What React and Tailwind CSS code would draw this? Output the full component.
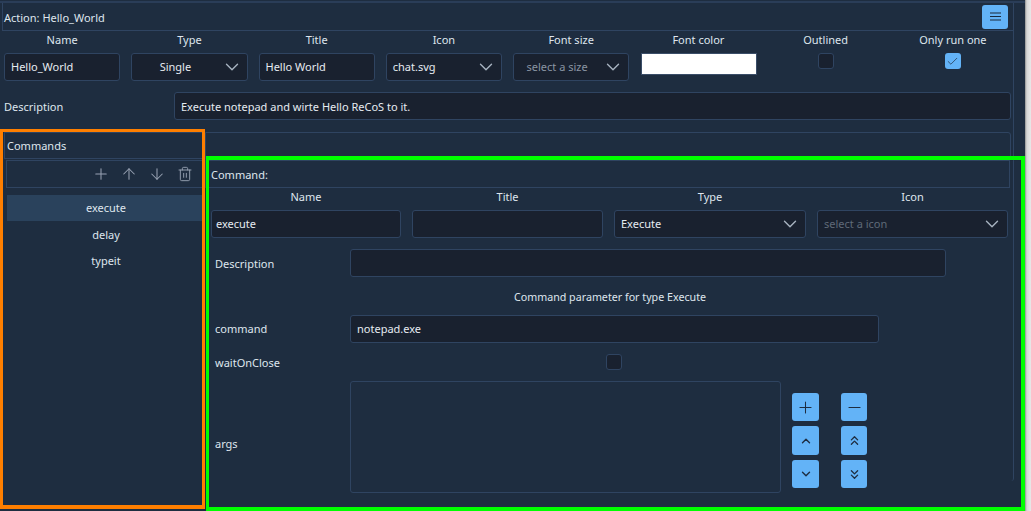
import React from "react";
import { Plus, Minus, ArrowUp, ArrowDown, Trash2, ChevronDown, ChevronUp, ChevronsUp, ChevronsDown, Check } from "lucide-react";

const Field = ({ children, className = "" }) => (
  <div className={"h-7 rounded-[3px] border border-[#2f4461] bg-[#19212f] flex items-center pl-[6px] pr-[6px] text-[#e6ebf1] " + className}>{children}</div>
);
const Select = ({ children, color = "text-[#e6ebf1]", center }) => (
  <div className={"h-7 rounded-[3px] border border-[#2f4461] bg-[#19212f] flex items-center " + color}>
    <span className={"flex-1 " + (center ? "text-center" : "pl-[6px]")}>{children}</span>
    <span className="w-[28px] pr-[2px] flex justify-center">
      <ChevronDown size={22} strokeWidth={1.5} className="text-[#a8b3c1]" />
    </span>
  </div>
);
const Lbl = ({ children }) => <div className="h-[14px] leading-[14px] text-center text-[#dfe6ee]">{children}</div>;
const Btn = ({ children, className = "" }) => (
  <div className={"rounded-[3px] bg-[#63b3f7] flex items-center justify-center text-[#1e2d40] " + className}>{children}</div>
);

export default function App() {
  return (
    <div className="flex w-[1031px] h-[511px] overflow-hidden bg-[#1e2d40] text-[11px] text-[#dfe6ee] font-['Noto_Sans',sans-serif]">
      <div className="relative w-[1025px] shrink-0">
        <div className="h-[3px] border-b-2 border-[#2a3d58]" />
        <div className="w-[1014px] h-[478px] border-r border-[#2f4461] rounded-br-[3px]">
          <div className="h-[28px] ml-[2px] border-l border-b border-[#2f4461] flex items-center justify-between pl-[1px] pr-[5px]">
            <span className="mt-[4px]">Action: Hello_World</span>
            <div className="w-[26px] h-[24px] rounded-[3px] bg-[#63b3f7] flex items-center justify-center">
              <svg width="11" height="9" viewBox="0 0 11 9"><path d="M0 1h11M0 4.5h11M0 8h11" stroke="#1a2a3d" strokeWidth="1.1" /></svg>
            </div>
          </div>
          <div className="pl-[4px] pr-[2px] pt-[2px]">
            <div className="grid grid-cols-8 gap-x-[11px] gap-y-[6px]">
              <Lbl>Name</Lbl><Lbl>Type</Lbl><Lbl>Title</Lbl><Lbl>Icon</Lbl><Lbl>Font size</Lbl><Lbl>Font color</Lbl><Lbl>Outlined</Lbl><Lbl>Only run one</Lbl>
              <Field>Hello_World</Field>
              <Select center>Single</Select>
              <Field>Hello World</Field>
              <Select>chat.svg</Select>
              <Select color="text-[#8a95a3]" center>select a size</Select>
              <div className="h-[22px] ml-[1px] bg-white border border-[#3a4d68]" />
              <div className="flex justify-center"><div className="w-4 h-4 rounded-[3px] border border-[#2f4461] bg-[#19212f]" /></div>
              <div className="flex justify-center"><div className="w-4 h-4 rounded-[3px] bg-[#63b3f7] flex items-center justify-center"><Check size={13} strokeWidth={1.3} className="text-[#1e2d40]" /></div></div>
            </div>
            <div className="flex items-center mt-[11px]">
              <span className="w-[170px] pt-[2px]">Description</span>
              <Field className="flex-1 pt-[2px]">Execute notepad and wirte Hello ReCoS to it.</Field>
            </div>
          </div>
          <div className="flex mt-[12px] pl-[4px] pr-[2px]">
            <div className="w-[201px] shrink-0">
              <div className="h-[27px] border border-[#2f4461] flex items-center pl-[2px] pt-[1px]">Commands</div>
              <div className="h-[28px] mt-[1px] ml-[2px] border border-[#2f4461] flex items-center justify-end pr-[10px] gap-[10px] text-[#98a2b3]">
                <Plus size={18} strokeWidth={1.4} /><ArrowUp size={18} strokeWidth={1.4} /><ArrowDown size={18} strokeWidth={1.4} /><Trash2 size={16} strokeWidth={1.4} className="mx-px" />
              </div>
              <div className="mt-[7px] ml-[3px] text-center">
                <div className="h-[26px] leading-[26px] bg-[#2a425c]">execute</div>
                <div className="h-[27px] leading-[27px]">delay</div>
                <div className="h-[26px] leading-[26px]">typeit</div>
              </div>
            </div>
            <div className="flex-1 min-w-0">
              <div className="h-[28px] border border-[#2f4461] rounded-tr-[3px]" />
              <div className="h-[28px] border border-[#2f4461] flex items-center pl-[5px] pt-[2px] mr-[1px]">Command:</div>
              <div className="grid grid-cols-[190px_191px_192px_191px] gap-x-[11px] gap-y-[6px] pl-[6px] mt-[2px]">
                <Lbl>Name</Lbl><Lbl>Title</Lbl><Lbl>Type</Lbl><Lbl>Icon</Lbl>
                <Field className="!pl-[4px]">execute</Field>
                <Field />
                <Select>Execute</Select>
                <Select color="text-[#5f6a78]">select a icon</Select>
              </div>
              <div className="flex items-center mt-[11px] pl-[10px]">
                <span className="w-[135px] pt-[2px]">Description</span>
                <Field className="w-[596px]" />
              </div>
              <div className="pl-[4px] text-center mt-[13px] h-[15px] leading-[15px] text-[10.7px]">Command parameter for type Execute</div>
              <div className="flex items-center mt-[10px] pl-[10px]">
                <span className="w-[135px]">command</span>
                <Field className="w-[529px]">notepad.exe</Field>
              </div>
              <div className="flex items-center h-4 mt-[11px] pl-[10px]">
                <span className="w-[391px] h-4 leading-[18px]">waitOnClose</span>
                <div className="w-4 h-4 rounded-[3px] border border-[#2f4461] bg-[#19212f]" />
              </div>
              <div className="flex items-start mt-[11px] pl-[10px]">
                <span className="w-[135px] mt-[55px]">args</span>
                <div className="w-[431px] h-[112px] rounded-[3px] border border-[#2f4461]" />
                <div className="grid grid-cols-[27px_26px] gap-x-[22px] gap-y-[5px] ml-[11px] mt-[12px]">
                  <Btn className="h-[28px]"><Plus size={19} strokeWidth={1.3} /></Btn>
                  <Btn className="h-[28px]"><Minus size={19} strokeWidth={1.3} /></Btn>
                  <Btn className="h-[29px]"><ChevronUp size={14} strokeWidth={2.4} /></Btn>
                  <Btn className="h-[29px]"><ChevronsUp size={15} strokeWidth={2.1} /></Btn>
                  <Btn className="h-[28px]"><ChevronDown size={14} strokeWidth={2.4} /></Btn>
                  <Btn className="h-[28px]"><ChevronsDown size={15} strokeWidth={2.1} /></Btn>
                </div>
              </div>
            </div>
          </div>
        </div>
        <div className="absolute left-0 top-[129px] w-[205px] h-[380px] border-[3px] border-b-4 border-[#ff7f00] pointer-events-none" />
        <div className="absolute left-[206px] top-[156px] w-[819px] h-[355px] border-[4px] border-l-[3px] border-[#00ff00] pointer-events-none" />
      </div>
      <div className="flex-1 bg-[linear-gradient(to_right,#8f8f8f,#d6d6d6_30%,#e8e8e8)]" />
    </div>
  );
}
